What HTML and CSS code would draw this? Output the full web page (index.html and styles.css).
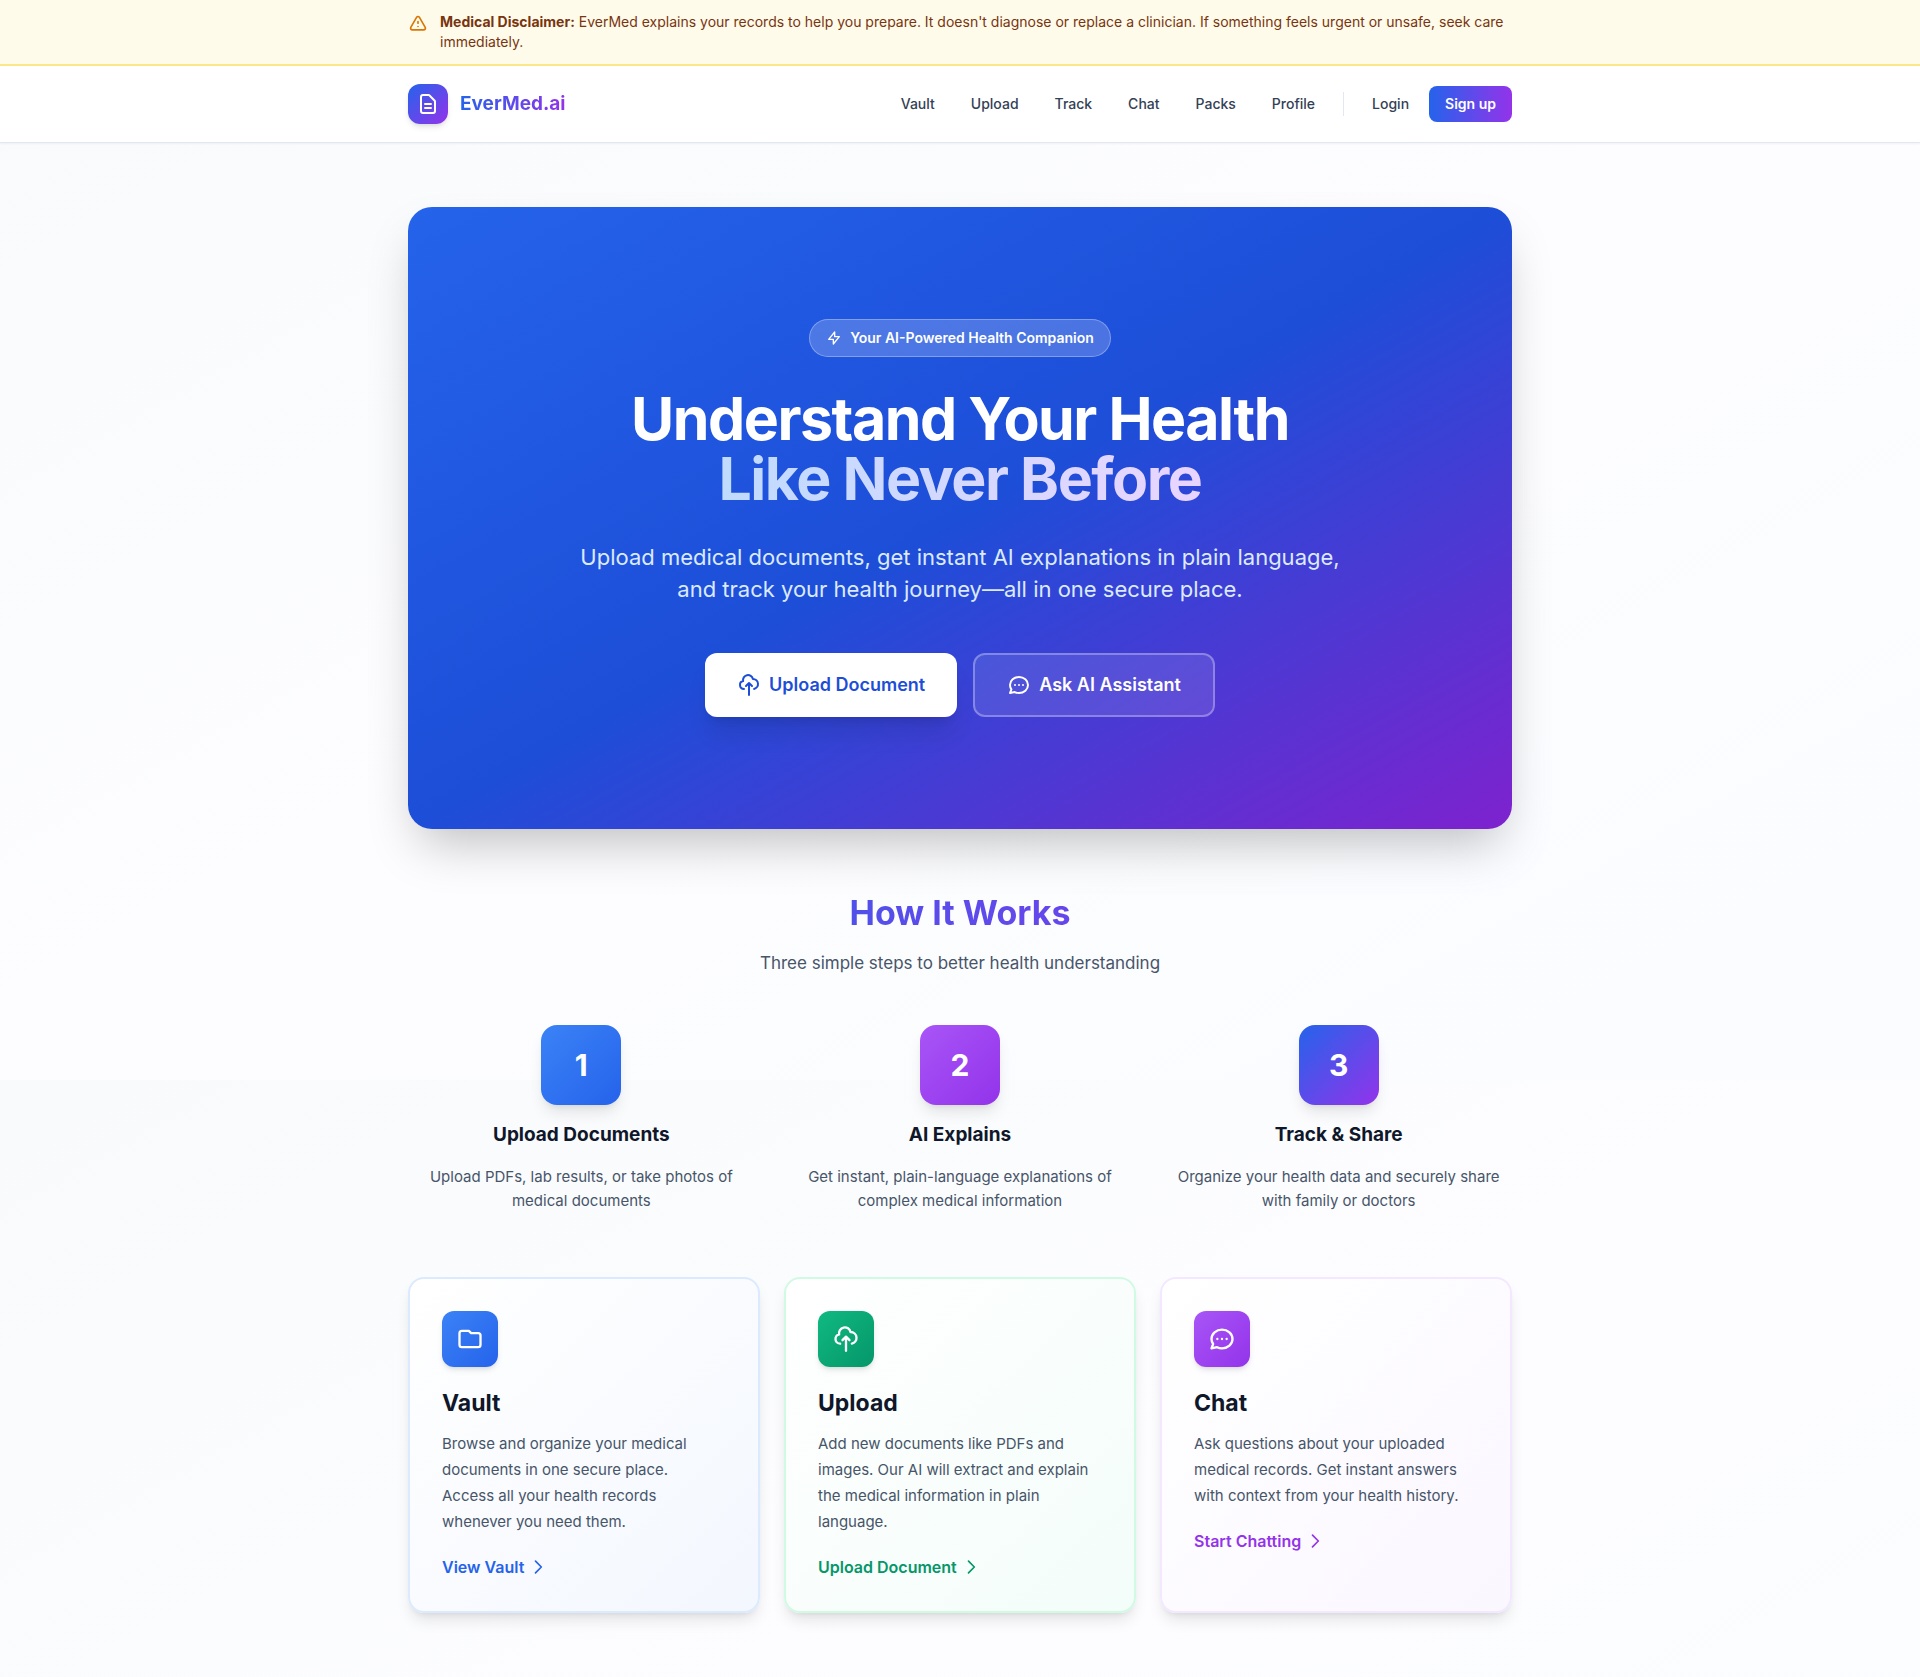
FILE: index.html
```html
<!DOCTYPE html>
<html lang="en">
<head>
<meta charset="utf-8">
<meta name="viewport" content="width=device-width, initial-scale=1">
<title>EverMed.ai</title>
<link rel="stylesheet" href="styles.css">
</head>
<body>
<svg class="sprite" aria-hidden="true">
  <symbol id="cloud" viewBox="0 0 24 24"><path d="M7 16a4 4 0 0 1-.88-7.903A5 5 0 1 1 15.9 6L16 6a5 5 0 0 1 1 9.9M15 13l-3-3m0 0-3 3m3-3v12"/></symbol>
  <symbol id="chat" viewBox="0 0 24 24"><path d="M8 12h.01M12 12h.01M16 12h.01M21 12c0 4.418-4.03 8-9 8a9.863 9.863 0 0 1-4.255-.949L3 20l1.395-3.72C3.512 15.042 3 13.574 3 12c0-4.418 4.03-8 9-8s9 3.582 9 8z"/></symbol>
  <symbol id="folder" viewBox="0 0 24 24"><path d="M3 7v10a2 2 0 0 0 2 2h14a2 2 0 0 0 2-2V9a2 2 0 0 0-2-2h-6l-2-2H5a2 2 0 0 0-2 2z"/></symbol>
  <symbol id="document" viewBox="0 0 24 24"><path d="M9 12h6m-6 4h6m2 5H7a2 2 0 0 1-2-2V5a2 2 0 0 1 2-2h5.586a1 1 0 0 1 .707.293l5.414 5.414a1 1 0 0 1 .293.707V19a2 2 0 0 1-2 2z"/></symbol>
  <symbol id="chevron" viewBox="0 0 24 24"><path d="m9 5 7 7-7 7"/></symbol>
  <symbol id="bolt" viewBox="0 0 24 24"><path d="M13 10V3L4 14h7v7l9-11h-7z"/></symbol>
  <symbol id="warning" viewBox="0 0 24 24"><path d="M12 9v2m0 4h.01m-6.938 4h13.856c1.54 0 2.502-1.667 1.732-3L13.732 4c-.77-1.333-2.694-1.333-3.464 0L3.34 16c-.77 1.333.192 3 1.732 3z"/></symbol>
</svg>

<aside class="disclaimer">
  <div class="container disclaimer-inner">
    <svg class="icon icon-20 disclaimer-icon" aria-hidden="true"><use href="#warning"/></svg>
    <p><strong>Medical Disclaimer:</strong> EverMed explains your records to help you prepare. It doesn't diagnose or replace a clinician. If something feels urgent or unsafe, seek care immediately.</p>
  </div>
</aside>

<header class="site-header">
  <div class="container header-inner">
    <a class="brand" href="#">
      <span class="brand-mark"><svg class="icon icon-24" aria-hidden="true"><use href="#document"/></svg></span>
      <span class="brand-name">EverMed.ai</span>
    </a>
    <nav class="nav">
      <a class="nav-link" href="#">Vault</a>
      <a class="nav-link" href="#">Upload</a>
      <a class="nav-link" href="#">Track</a>
      <a class="nav-link" href="#">Chat</a>
      <a class="nav-link" href="#">Packs</a>
      <a class="nav-link" href="#">Profile</a>
      <span class="nav-divider"></span>
      <a class="nav-link" href="#">Login</a>
      <a class="signup" href="#">Sign up</a>
    </nav>
  </div>
</header>

<main class="container main">
  <section class="hero">
    <div class="badge"><svg class="icon icon-16" aria-hidden="true"><use href="#bolt"/></svg>Your AI-Powered Health Companion</div>
    <h1>Understand Your Health <span class="hero-accent">Like Never Before</span></h1>
    <p class="hero-text">Upload medical documents, get instant AI explanations in plain language, and track your health journey—all in one secure place.</p>
    <div class="hero-actions">
      <a class="button button-solid" href="#"><svg class="icon icon-24" aria-hidden="true"><use href="#cloud"/></svg>Upload Document</a>
      <a class="button button-glass" href="#"><svg class="icon icon-24" aria-hidden="true"><use href="#chat"/></svg>Ask AI Assistant</a>
    </div>
  </section>

  <section class="how">
    <h2>How It Works</h2>
    <p class="how-text">Three simple steps to better health understanding</p>
    <div class="steps">
      <div class="step">
        <div class="step-number blue">1</div>
        <h3>Upload Documents</h3>
        <p>Upload PDFs, lab results, or take photos of medical documents</p>
      </div>
      <div class="step">
        <div class="step-number purple">2</div>
        <h3>AI Explains</h3>
        <p>Get instant, plain-language explanations of complex medical information</p>
      </div>
      <div class="step">
        <div class="step-number brand-fill">3</div>
        <h3>Track &amp; Share</h3>
        <p>Organize your health data and securely share with family or doctors</p>
      </div>
    </div>
  </section>

  <section class="cards">
    <article class="card card-blue">
      <div class="card-icon blue"><svg class="icon icon-28" aria-hidden="true"><use href="#folder"/></svg></div>
      <h3>Vault</h3>
      <p>Browse and organize your medical documents in one secure place. Access all your health records whenever you need them.</p>
      <a href="#">View Vault<svg class="icon icon-20" aria-hidden="true"><use href="#chevron"/></svg></a>
    </article>
    <article class="card card-green">
      <div class="card-icon green"><svg class="icon icon-28" aria-hidden="true"><use href="#cloud"/></svg></div>
      <h3>Upload</h3>
      <p>Add new documents like PDFs and images. Our AI will extract and explain the medical information in plain language.</p>
      <a href="#">Upload Document<svg class="icon icon-20" aria-hidden="true"><use href="#chevron"/></svg></a>
    </article>
    <article class="card card-purple">
      <div class="card-icon purple"><svg class="icon icon-28" aria-hidden="true"><use href="#chat"/></svg></div>
      <h3>Chat</h3>
      <p>Ask questions about your uploaded medical records. Get instant answers with context from your health history.</p>
      <a href="#">Start Chatting<svg class="icon icon-20" aria-hidden="true"><use href="#chevron"/></svg></a>
    </article>
  </section>
</main>
</body>
</html>
```
FILE: styles.css
```css
*, *::before, *::after { box-sizing: border-box; }

body {
  margin: 0;
  font-family: Inter, "Liberation Sans", sans-serif;
  font-size: 15px;
  line-height: 24px;
  color: #0f172a;
  background: linear-gradient(to bottom right, #f8fafc, #fdfdff 50%, #fafcff);
  background-size: 100% 1080px;
}

h1, h2, h3, p { margin: 0; }
a { color: inherit; text-decoration: none; }

.sprite { display: none; }

.icon {
  flex: none;
  fill: none;
  stroke: currentColor;
  stroke-width: 2;
  stroke-linecap: round;
  stroke-linejoin: round;
}
.icon-16 { width: 16px; height: 16px; }
.icon-20 { width: 20px; height: 20px; }
.icon-24 { width: 24px; height: 24px; }
.icon-28 { width: 28px; height: 28px; }

.container {
  width: 100%;
  max-width: 1152px;
  margin: 0 auto;
  padding: 0 24px;
}

.blue { background: linear-gradient(to bottom right, #3b82f6, #2563eb); }
.green { background: linear-gradient(to bottom right, #10b981, #059669); }
.purple { background: linear-gradient(to bottom right, #a855f7, #9333ea); }
.brand-fill { background: linear-gradient(to bottom right, #2563eb, #9333ea); }

/* Disclaimer */
.disclaimer {
  background: #fffbeb;
  border-bottom: 2px solid #fde68a;
  color: #78350f;
  font-size: 14px;
  line-height: 20px;
}
.disclaimer-inner {
  display: flex;
  align-items: flex-start;
  gap: 12px;
  padding-top: 12px;
  padding-bottom: 12px;
}
.disclaimer-icon { margin-top: 2px; color: #d97706; }

/* Header */
.site-header {
  background: #fff;
  border-bottom: 1px solid #e2e8f0;
  box-shadow: 0 1px 2px rgba(0, 0, 0, .05);
}
.header-inner {
  display: flex;
  align-items: center;
  justify-content: space-between;
  padding-top: 18px;
  padding-bottom: 18px;
}
.brand { display: flex; align-items: center; gap: 12px; }
.brand-mark {
  display: flex;
  align-items: center;
  justify-content: center;
  width: 40px;
  height: 40px;
  border-radius: 12px;
  color: #fff;
  background: linear-gradient(to bottom right, #2563eb, #9333ea);
  box-shadow: 0 4px 6px -1px rgba(0, 0, 0, .1), 0 2px 4px -2px rgba(0, 0, 0, .1);
}
.brand-name {
  font-size: 19px;
  line-height: 28px;
  font-weight: 700;
  color: transparent;
  background: linear-gradient(90deg, #2563eb, #9333ea);
  background-clip: text;
}
.nav {
  display: flex;
  align-items: center;
  gap: 4px;
  font-size: 14px;
  line-height: 20px;
}
.nav-link { padding: 8px 16px; font-weight: 500; color: #334155; }
.nav-divider { width: 1px; height: 24px; margin: 0 8px; background: #e2e8f0; }
.signup {
  padding: 8px 16px;
  border-radius: 8px;
  font-weight: 600;
  color: #fff;
  background: linear-gradient(90deg, #2563eb, #9333ea);
}

/* Hero */
.main { padding-top: 64px; padding-bottom: 64px; }
.hero {
  display: flex;
  flex-direction: column;
  align-items: center;
  padding: 112px 32px;
  border-radius: 24px;
  text-align: center;
  color: #fff;
  background: linear-gradient(to bottom right, #2563eb 0%, #1d4ed8 50%, #7e22ce 100%);
  box-shadow: 0 25px 50px -12px rgba(0, 0, 0, .25);
}
.badge {
  display: flex;
  align-items: center;
  gap: 8px;
  padding: 8px 16px;
  border: 1px solid rgba(255, 255, 255, .3);
  border-radius: 19px;
  background: rgba(255, 255, 255, .2);
  font-size: 14px;
  line-height: 20px;
  font-weight: 600;
}
.hero h1 {
  margin-top: 32px;
  font-size: 59px;
  line-height: 60px;
  font-weight: 700;
  letter-spacing: -0.025em;
}
.hero-accent {
  display: block;
  width: fit-content;
  margin: 0 auto;
  color: transparent;
  background: linear-gradient(90deg, #bfdbfe, #e9d5ff);
  background-clip: text;
}
.hero-text {
  max-width: 768px;
  margin-top: 32px;
  font-size: 22px;
  line-height: 32px;
  color: #dbeafe;
}
.hero-actions { display: flex; gap: 16px; margin-top: 48px; }
.button {
  display: flex;
  align-items: center;
  gap: 8px;
  min-height: 64px;
  padding: 0 32px;
  border-radius: 12px;
  font-size: 18px;
  line-height: 28px;
  font-weight: 600;
}
.button-solid {
  background: #fff;
  color: #1d4ed8;
  box-shadow: 0 20px 25px -5px rgba(0, 0, 0, .1), 0 8px 10px -6px rgba(0, 0, 0, .1);
}
.button-glass {
  border: 2px solid rgba(255, 255, 255, .3);
  background: rgba(255, 255, 255, .1);
}

/* How it works */
.how { margin-top: 64px; text-align: center; }
.how h2 {
  font-size: 34px;
  line-height: 40px;
  font-weight: 700;
  color: transparent;
  background: linear-gradient(90deg, #2563eb, #9333ea);
  background-clip: text;
}
.how-text {
  margin-top: 16px;
  font-size: 17px;
  line-height: 28px;
  color: #475569;
}
.steps {
  display: grid;
  grid-template-columns: repeat(3, 1fr);
  gap: 32px;
  margin-top: 48px;
}
.step { display: flex; flex-direction: column; align-items: center; gap: 16px; }
.step-number {
  display: flex;
  align-items: center;
  justify-content: center;
  width: 80px;
  height: 80px;
  border-radius: 16px;
  color: #fff;
  font-size: 30px;
  line-height: 36px;
  font-weight: 700;
  box-shadow: 0 10px 15px -3px rgba(0, 0, 0, .1), 0 4px 6px -4px rgba(0, 0, 0, .1);
}
.step h3 { font-size: 19px; line-height: 28px; font-weight: 700; }
.step p { max-width: 328px; color: #475569; }

/* Feature cards */
.cards {
  display: grid;
  grid-template-columns: repeat(3, 1fr);
  gap: 24px;
  margin-top: 64px;
}
.card {
  padding: 32px;
  border: 2px solid;
  border-radius: 16px;
  box-shadow: 0 10px 15px -3px rgba(0, 0, 0, .1), 0 4px 6px -4px rgba(0, 0, 0, .1);
}
.card-blue { border-color: #dbeafe; background: linear-gradient(to bottom right, #fff, #f3f7fe); }
.card-green { border-color: #d1fae5; background: linear-gradient(to bottom right, #fff, #f3fdf9); }
.card-purple { border-color: #f3e8ff; background: linear-gradient(to bottom right, #fff, #faf7ff); }
.card-icon {
  display: flex;
  align-items: center;
  justify-content: center;
  width: 56px;
  height: 56px;
  border-radius: 12px;
  color: #fff;
  box-shadow: 0 4px 6px -1px rgba(0, 0, 0, .1), 0 2px 4px -2px rgba(0, 0, 0, .1);
}
.card h3 { margin-top: 20px; font-size: 23px; line-height: 32px; font-weight: 700; }
.card p { margin-top: 12px; padding-right: 8px; line-height: 26px; color: #475569; }
.card a {
  display: flex;
  align-items: center;
  gap: 4px;
  width: fit-content;
  margin-top: 20px;
  font-size: 16px;
  font-weight: 600;
}
.card-blue a { color: #2563eb; }
.card-green a { color: #059669; }
.card-purple a { color: #9333ea; }

@media (max-width: 900px) {
  .steps, .cards { grid-template-columns: 1fr; }
  .header-inner, .nav, .hero-actions { flex-wrap: wrap; }
}
```
